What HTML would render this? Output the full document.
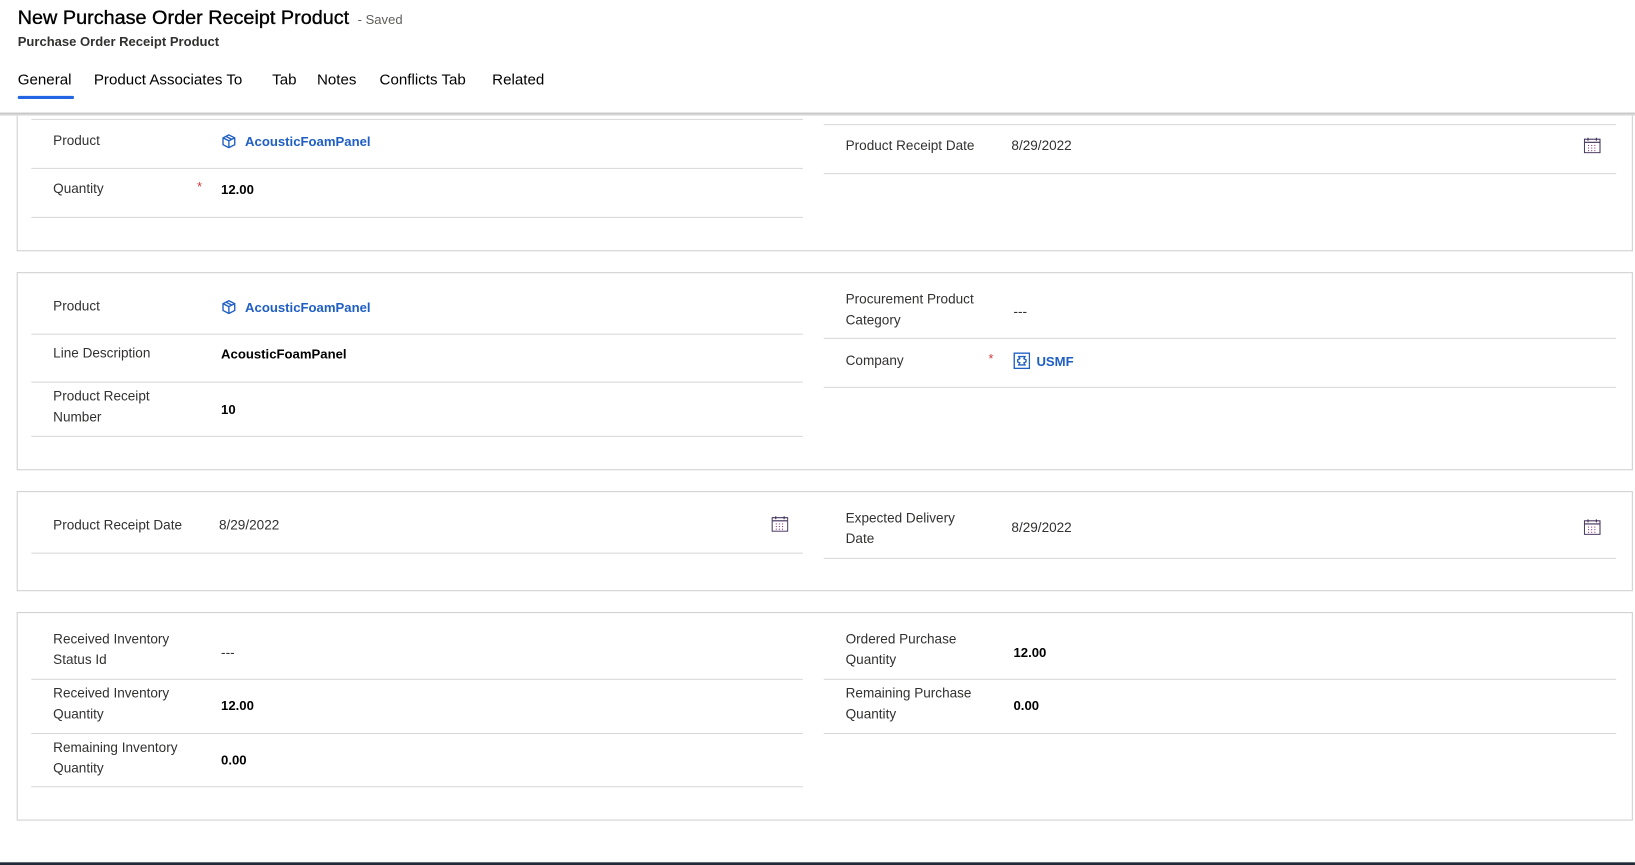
<!DOCTYPE html>
<html><head><meta charset="utf-8"><style>
html,body{margin:0;padding:0;background:#fff;width:1635px;height:864px;overflow:hidden}
#w{position:absolute;left:0;top:0;width:1568px;height:829px;transform:scale(1.0427);transform-origin:0 0;font-family:"Liberation Sans",sans-serif;color:#323130}
.a{position:absolute;white-space:nowrap}
.t{font-size:19px;color:#000;top:7px;left:17px;-webkit-text-stroke:0.35px #000}
.sv{font-size:12.5px;color:#605e5c;top:12px;left:343px}
.st{font-size:12.5px;font-weight:bold;top:33px;left:17px;color:#323130}
.tab{font-size:14.5px;color:#000;top:69px}
.ln{position:absolute;height:1px;background:#d8d8d8}
.box{position:absolute;border:1px solid #cfcfcf;box-sizing:border-box}
.l{font-size:13px;color:#323130;line-height:20px}
.v{font-size:12.6px;font-weight:bold;color:#000;line-height:20px}
.lk{font-size:12.6px;font-weight:bold;color:#1f5fc4;line-height:20px}
.r{color:#d13438;font-size:12px}
</style></head><body><div id="w">
<div class="a t">New Purchase Order Receipt Product</div>
<div class="a sv">- Saved</div>
<div class="a st">Purchase Order Receipt Product</div>
<div class="a tab" style="left:17px">General</div>
<div class="a tab" style="left:90px">Product Associates To</div>
<div class="a tab" style="left:261px">Tab</div>
<div class="a tab" style="left:304px">Notes</div>
<div class="a tab" style="left:364px">Conflicts Tab</div>
<div class="a tab" style="left:472px">Related</div>
<div style="position:absolute;left:17px;top:92px;width:54px;height:3px;background:#2266e3;border-radius:2px"></div>

<!-- section 1 -->
<div class="box" style="left:16px;top:110px;width:1550px;height:131px;border-top:none"></div>
<div style="position:absolute;left:0;top:108px;width:1568px;height:3px;background:linear-gradient(#bdbdbd,#e6e6e6)"></div>
<div class="ln" style="left:30px;top:114px;width:740px"></div>
<div class="a l" style="left:51px;top:125px">Product</div>
<svg class="a" style="left:212px;top:128px" width="15" height="15" viewBox="0 0 16 16" fill="none" stroke="#1f5fc4" stroke-width="1.4"><path d="M8 1.5 14 4.5v7L8 14.5 2 11.5v-7z M2 4.5 8 7.5 14 4.5 M8 7.5v7 M5 3 11 6"/></svg>
<div class="a lk" style="left:235px;top:126px">AcousticFoamPanel</div>
<div class="ln" style="left:30px;top:161px;width:740px"></div>
<div class="a l" style="left:51px;top:171px">Quantity</div>
<div class="a r" style="left:189px;top:172px">*</div>
<div class="a v" style="left:212px;top:172px">12.00</div>
<div class="ln" style="left:30px;top:208px;width:740px"></div>
<div class="ln" style="left:790px;top:119px;width:760px"></div>
<div class="a l" style="left:811px;top:130px">Product Receipt Date</div>
<div class="a l" style="left:970px;top:130px;color:#323130">8/29/2022</div>
<svg class="a" style="left:1519px;top:132px" width="16" height="15" viewBox="0 0 16 15" fill="none"><rect x="0.5" y="1.5" width="15" height="13" stroke="#3b2a55"/><path d="M1 4.5h14M4 0v3M12 0v3" stroke="#3b2a55"/><g fill="#8a2e8a"><rect x="4" y="7" width="1" height="1"/><rect x="7" y="7" width="1" height="1"/><rect x="10" y="7" width="1" height="1"/><rect x="4" y="9.5" width="1" height="1"/><rect x="7" y="9.5" width="1" height="1"/><rect x="10" y="9.5" width="1" height="1"/><rect x="4" y="12" width="1" height="1"/><rect x="7" y="12" width="1" height="1"/><rect x="10" y="12" width="1" height="1"/></g></svg>
<div class="ln" style="left:790px;top:166px;width:760px"></div>

<!-- section 2 -->
<div class="box" style="left:16px;top:261px;width:1550px;height:190px"></div>
<div class="a l" style="left:51px;top:284px">Product</div>
<svg class="a" style="left:212px;top:287px" width="15" height="15" viewBox="0 0 16 16" fill="none" stroke="#1f5fc4" stroke-width="1.4"><path d="M8 1.5 14 4.5v7L8 14.5 2 11.5v-7z M2 4.5 8 7.5 14 4.5 M8 7.5v7 M5 3 11 6"/></svg>
<div class="a lk" style="left:235px;top:285px">AcousticFoamPanel</div>
<div class="ln" style="left:30px;top:320px;width:740px"></div>
<div class="a l" style="left:51px;top:329px">Line Description</div>
<div class="a v" style="left:212px;top:330px">AcousticFoamPanel</div>
<div class="ln" style="left:30px;top:366px;width:740px"></div>
<div class="a l" style="left:51px;top:370px">Product Receipt<br>Number</div>
<div class="a v" style="left:212px;top:383px">10</div>
<div class="ln" style="left:30px;top:418px;width:740px"></div>
<div class="a l" style="left:811px;top:277px">Procurement Product<br>Category</div>
<div class="a l" style="left:972px;top:289px">---</div>
<div class="ln" style="left:790px;top:324px;width:760px"></div>
<div class="a l" style="left:811px;top:336px">Company</div>
<div class="a r" style="left:948px;top:337px">*</div>
<svg class="a" style="left:972px;top:338px" width="16" height="16" viewBox="0 0 16 16" fill="none" stroke="#1f5fc4" stroke-width="1.3"><rect x="0.7" y="0.7" width="14.6" height="14.6"/><path d="M5 4h6l-1 2 2 1v2l-2 1 1 2H5l1-2-2-1V7l2-1z"/></svg>
<div class="a lk" style="left:994px;top:337px">USMF</div>
<div class="ln" style="left:790px;top:371px;width:760px"></div>

<!-- section 3 -->
<div class="box" style="left:16px;top:471px;width:1550px;height:96px"></div>
<div class="a l" style="left:51px;top:494px">Product Receipt Date</div>
<div class="a l" style="left:210px;top:494px">8/29/2022</div>
<svg class="a" style="left:740px;top:495px" width="16" height="15" viewBox="0 0 16 15" fill="none"><rect x="0.5" y="1.5" width="15" height="13" stroke="#3b2a55"/><path d="M1 4.5h14M4 0v3M12 0v3" stroke="#3b2a55"/><g fill="#8a2e8a"><rect x="4" y="7" width="1" height="1"/><rect x="7" y="7" width="1" height="1"/><rect x="10" y="7" width="1" height="1"/><rect x="4" y="9.5" width="1" height="1"/><rect x="7" y="9.5" width="1" height="1"/><rect x="10" y="9.5" width="1" height="1"/><rect x="4" y="12" width="1" height="1"/><rect x="7" y="12" width="1" height="1"/><rect x="10" y="12" width="1" height="1"/></g></svg>
<div class="ln" style="left:30px;top:530px;width:740px"></div>
<div class="a l" style="left:811px;top:487px">Expected Delivery<br>Date</div>
<div class="a l" style="left:970px;top:496px">8/29/2022</div>
<svg class="a" style="left:1519px;top:498px" width="16" height="15" viewBox="0 0 16 15" fill="none"><rect x="0.5" y="1.5" width="15" height="13" stroke="#3b2a55"/><path d="M1 4.5h14M4 0v3M12 0v3" stroke="#3b2a55"/><g fill="#8a2e8a"><rect x="4" y="7" width="1" height="1"/><rect x="7" y="7" width="1" height="1"/><rect x="10" y="7" width="1" height="1"/><rect x="4" y="9.5" width="1" height="1"/><rect x="7" y="9.5" width="1" height="1"/><rect x="10" y="9.5" width="1" height="1"/><rect x="4" y="12" width="1" height="1"/><rect x="7" y="12" width="1" height="1"/><rect x="10" y="12" width="1" height="1"/></g></svg>
<div class="ln" style="left:790px;top:535px;width:760px"></div>

<!-- section 4 -->
<div class="box" style="left:16px;top:587px;width:1550px;height:200px"></div>
<div class="a l" style="left:51px;top:603px">Received Inventory<br>Status Id</div>
<div class="a l" style="left:212px;top:616px">---</div>
<div class="ln" style="left:30px;top:651px;width:740px"></div>
<div class="a l" style="left:51px;top:655px">Received Inventory<br>Quantity</div>
<div class="a v" style="left:212px;top:667px">12.00</div>
<div class="ln" style="left:30px;top:703px;width:740px"></div>
<div class="a l" style="left:51px;top:707px">Remaining Inventory<br>Quantity</div>
<div class="a v" style="left:212px;top:719px">0.00</div>
<div class="ln" style="left:30px;top:754px;width:740px"></div>
<div class="a l" style="left:811px;top:603px">Ordered Purchase<br>Quantity</div>
<div class="a v" style="left:972px;top:616px">12.00</div>
<div class="ln" style="left:790px;top:651px;width:760px"></div>
<div class="a l" style="left:811px;top:655px">Remaining Purchase<br>Quantity</div>
<div class="a v" style="left:972px;top:667px">0.00</div>
<div class="ln" style="left:790px;top:703px;width:760px"></div>

<div style="position:absolute;left:0;top:826.5px;width:1568px;height:3px;background:#1f2a36"></div>
</div></body></html>
